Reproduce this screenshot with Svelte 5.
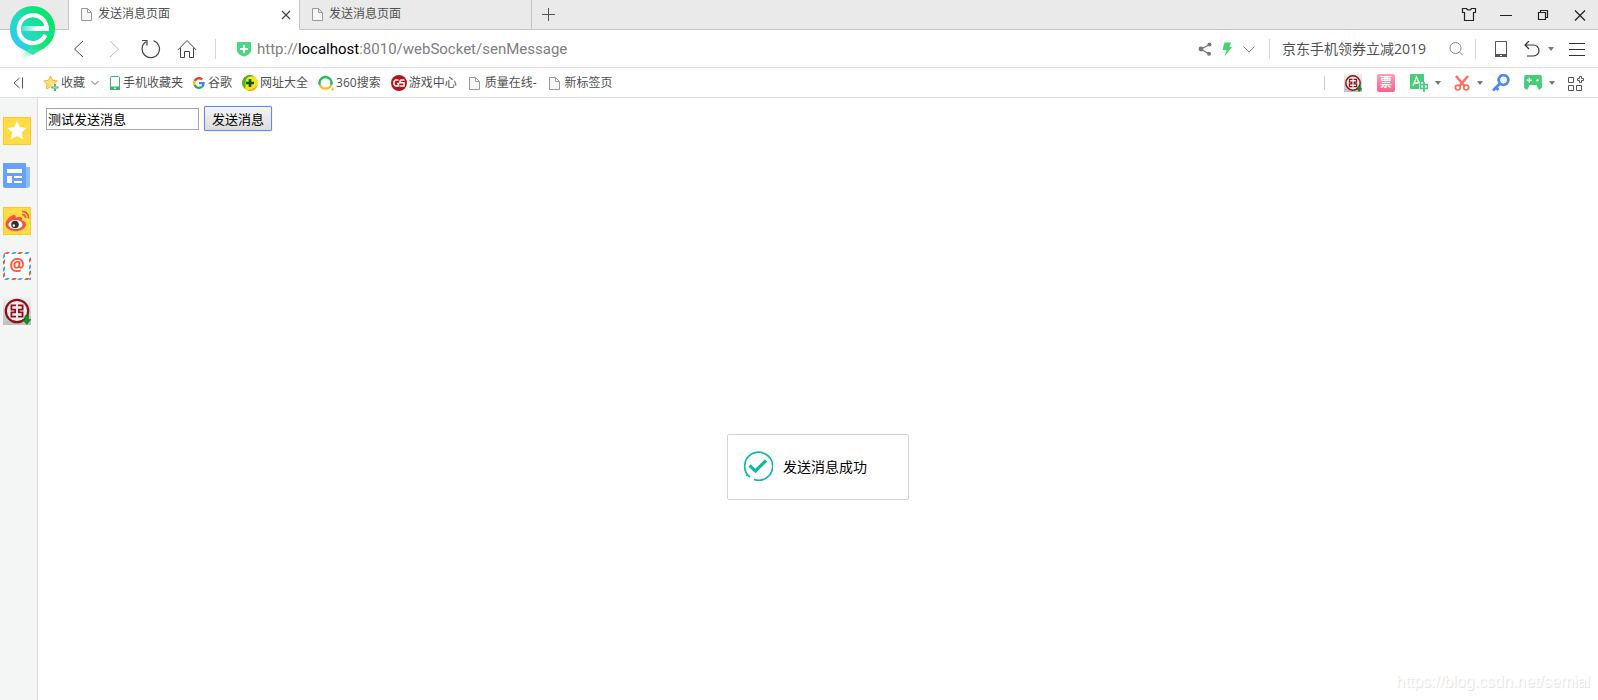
<script>
  let message = $state('测试发送消息');
</script>

{#snippet page()}
  <svg class="i16" viewBox="0 0 16 16"><path d="M2.500 2.500h6l4 4v8h-10zM8.500 2.500v4h4" fill="#f7f7f7" stroke="#999" /></svg>
{/snippet}

{#snippet caret()}
  <svg class="caret" viewBox="0 0 6 4"><path d="M0 0h6L3 4z" fill="#777" /></svg>
{/snippet}

{#snippet bank(size)}
  <svg class={size} viewBox="0 0 30 30">
    <defs>
      <linearGradient id="bank-{size}" x1="0" y1="0" x2="0" y2="1"><stop offset="0" stop-color="#f1f1f1" /><stop offset="1" stop-color="#bdbdbd" /></linearGradient>
    </defs>
    <rect width="30" height="30" fill="url(#bank-{size})" />
    <circle cx="15" cy="15" r="12" fill="#ececec" stroke="#8f1018" stroke-width="2.400" />
    <path d="M14 9H9v4.500h4v3H9V21h5M16 9h5v4.500h-4v3h4V21h-5" fill="none" stroke="#8f1018" stroke-width="1.900" />
    <path d="M23.500 20h4v4H30l-4.500 5.500L21 24h2.500z" fill="#11902a" stroke="#0b6b1d" stroke-width=".6" />
  </svg>
{/snippet}

<div class="browser">
  <a class="logo" href="#home" aria-label="主页">
    <svg viewBox="0 0 48 58">
      <defs>
        <linearGradient id="pin" x1="0.200" y1="0.900" x2="0.900" y2="0.300"><stop offset="0" stop-color="#2bccf4" /><stop offset=".5" stop-color="#22dcb4" /><stop offset="1" stop-color="#08e56c" /></linearGradient>
        <linearGradient id="tail" x1="0.800" y1="0" x2="0.200" y2="1"><stop offset="0" stop-color="#06e566" /><stop offset=".5" stop-color="#1fe583" /><stop offset="1" stop-color="#7df5cc" stop-opacity="0" /></linearGradient>
        <linearGradient id="bar" x1="0" y1="0" x2="1" y2="0"><stop offset="0" stop-color="#fff" stop-opacity=".1" /><stop offset=".6" stop-color="#fff" /></linearGradient>
      </defs>
      <path d="M24.500 1A22.500 22.500 0 0 1 47 24c0 8-4 13-9 17L25 50l-9-5C7 41 2 34 2 24A22.500 22.500 0 0 1 24.500 1z" fill="url(#pin)" />
      <path d="M46 30c-2 6-4 9-10 13.500L11 56l2-5 15-14z" fill="url(#tail)" />
      <path d="M37.500 30A14 14 0 1 1 38 19.500q.7 2 .7 4.500" fill="none" stroke="#fff" stroke-width="4.200" />
      <path d="M12 21h28.800v5H12z" fill="url(#bar)" />
    </svg>
  </a>

  <header class="tabs">
    <span class="lead"></span>
    <div class="tab active">
      {@render page()}<span class="name">发送消息页面</span>
      <button aria-label="关闭标签"><svg class="i16" viewBox="0 0 16 16"><path d="M4 5l8 8M12 5l-8 8" stroke="#444" stroke-width="1.200" /></svg></button>
    </div>
    <div class="tab">{@render page()}<span class="name">发送消息页面</span></div>
    <span class="rule"></span>
    <button class="plus" aria-label="新建标签"><svg class="i16" viewBox="0 0 16 16"><path d="M8.500 1v13M2 7.500h13" stroke="#555" /></svg></button>
    <div class="window">
      <button aria-label="皮肤"><svg class="i16" viewBox="0 0 16 16"><path d="M1.500 1.500h4c.5 2 4.500 2 5 0h4v4h-2v8h-9v-8h-2z" fill="none" stroke="#222" stroke-width="1.200" /></svg></button>
      <button aria-label="最小化"><svg class="i16" viewBox="0 0 16 16"><path d="M2 8.500h12" stroke="#222" /></svg></button>
      <button aria-label="还原"><svg class="i16" viewBox="0 0 16 16"><path d="M3.500 5.500h7v7h-7zM5.500 5V3.500h7v7H11" fill="none" stroke="#222" stroke-width="1.200" /></svg></button>
      <button aria-label="关闭"><svg class="i16" viewBox="0 0 16 16"><path d="M3 3.500l10 10M13 3.500l-10 10" stroke="#222" stroke-width="1.200" /></svg></button>
    </div>
  </header>

  <nav class="toolbar">
    <div class="history">
      <button aria-label="后退"><svg class="i20" viewBox="0 0 20 20"><path d="M14 2L5.500 10l8.500 8" fill="none" stroke="#444" /></svg></button>
      <button aria-label="前进"><svg class="i20" viewBox="0 0 20 20"><path d="M5 2l8.500 8L5 18" fill="none" stroke="#bbb" /></svg></button>
      <button aria-label="刷新"><svg class="i20" viewBox="0 0 20 20"><path d="M12.500 1.700a8.700 8.700 0 1 1-7.500 1M1 1.500h5v5" fill="none" stroke="#444" stroke-width="1.200" /></svg></button>
      <button aria-label="主页"><svg class="i20" viewBox="0 0 20 20"><path d="M.8 11L10 1.500 19.200 11M3.500 9v9.500h4v-6h5v6h4V9" fill="none" stroke="#444" /></svg></button>
    </div>
    <span class="bar"></span>
    <svg class="i16 shield" viewBox="0 0 16 16"><path d="M1 1h14v8c0 4-4 5.500-7 6.500C5 14.500 1 13 1 9z" fill="#4bd880" /><path d="M8 4v8M4 8h8" stroke="#fff" stroke-width="2" /></svg>
    <p class="url">http://<b>localhost</b>:8010/webSocket/senMessage</p>
    <div class="tools">
      <button aria-label="分享"><svg class="i16" viewBox="0 0 16 16"><path d="M13 3.500L4 8l8 5" fill="none" stroke="#777" stroke-width="1.300" /><circle cx="12.500" cy="3.500" r="2" fill="#777" /><circle cx="4" cy="8" r="2.400" fill="#777" /><circle cx="12" cy="12.800" r="2" fill="#777" /></svg></button>
      <button aria-label="加速"><svg class="i16" viewBox="0 0 16 16"><path d="M5.500 1.500H12L10.500 6H13L5.500 15.500 7.500 9H3.500z" fill="#45d275" /></svg></button>
      <button aria-label="更多"><svg class="i16" viewBox="0 0 16 16"><path d="M2.500 5.500L8 11l5.500-5.500" fill="none" stroke="#888" /></svg></button>
    </div>
    <span class="bar near"></span>
    <span class="hint">京东手机领券立减2019</span>
    <button class="find" aria-label="搜索"><svg class="i16" viewBox="0 0 16 16"><circle cx="7.500" cy="7" r="5.500" fill="none" stroke="#888" /><path d="M11.500 11l3 3" stroke="#888" /></svg></button>
    <span class="bar"></span>
    <div class="end">
      <button aria-label="手机"><svg class="i16" viewBox="0 0 16 16"><path d="M2.500.500h11v15h-11z" fill="none" stroke="#555" /><path d="M2 13h12v3H2z" fill="#555" /><path d="M7 14.500h2" stroke="#fff" /></svg></button>
      <button class="undo" aria-label="撤销"><svg class="i16" viewBox="0 0 16 16"><path d="M5 0L1 4l4 4M1 4h8.500a5.500 5.500 0 0 1 0 11H3" fill="none" stroke="#333" stroke-width="1.200" /></svg>{@render caret()}</button>
      <button aria-label="菜单"><svg class="i16" viewBox="0 0 16 16"><path d="M0 2.500h16M0 8.500h16M0 14.500h16" stroke="#333" /></svg></button>
    </div>
  </nav>

  <nav class="marks">
    <button class="fold" aria-label="收起"><svg class="i16" viewBox="0 0 16 16"><path d="M9.500 3L4 8l5.500 5M12.500 2.500v11" fill="none" stroke="#555" /></svg></button>
    <button class="mark fav">
      <svg class="i16" viewBox="0 0 16 16"><path d="M7.500 1l2.100 4.300 4.700.7-3.400 3.300.8 4.700-4.200-2.200L3.300 14l.8-4.700L.7 6l4.700-.7z" fill="#ffe07a" stroke="#f0b53a" /><path d="M12 9v7M8.500 12.500h7" stroke="#fff" stroke-width="4" /><path d="M12 9v7M8.500 12.500h7" stroke="#3fb868" stroke-width="2.200" /><path d="M12 10.500v4M10 12.500h4" stroke="#b9ecca" stroke-width=".7" /></svg>收藏
      <svg class="chev" viewBox="0 0 8 6"><path d="M.500 1L4 4.500 7.500 1" fill="none" stroke="#666" /></svg>
    </button>
    <a class="mark" href="#phone"><svg class="phone" viewBox="0 0 12 16"><rect x="1.500" y="1.500" width="9" height="13" rx="1" fill="#fff" stroke="#3bb76c" /><path d="M1 11.500h10V15H1z" fill="#3bb76c" /><path d="M5 13.200h2" stroke="#fff" /></svg>手机收藏夹</a>
    <a class="mark google" href="#google">
      <svg class="i12" viewBox="0 0 48 48"><path fill="#ea4335" d="M24 9.500c3.500 0 6.700 1.200 9.200 3.600l6.900-6.900C35.900 2.400 30.500 0 24 0 14.600 0 6.500 5.400 2.600 13.200l8 6.200C12.400 13.700 17.700 9.500 24 9.500z" /><path fill="#4285f4" d="M47 24.600c0-1.600-.2-3.100-.4-4.600H24v9h12.900c-.6 3-2.200 5.500-4.700 7.200l7.700 6C44.400 38 47 31.800 47 24.600z" /><path fill="#fbbc05" d="M10.500 28.600a14.500 14.500 0 0 1 0-9.200l-8-6.200a24 24 0 0 0 0 21.600z" /><path fill="#34a853" d="M24 48c6.500 0 11.900-2.100 15.900-5.800l-7.700-6c-2.200 1.500-4.900 2.300-8.200 2.300-6.300 0-11.600-4.200-13.500-9.900l-8 6.200C6.500 42.600 14.600 48 24 48z" /></svg>谷歌
    </a>
    <a class="mark" href="#sites"><svg class="i16" viewBox="0 0 16 16"><circle cx="8" cy="8" r="8" fill="#f8e31c" /><path d="M0 8a8 8 0 0 1 12.500-6.600C8 1 5 2 4 5c-1 3 0 6-1 9A8 8 0 0 1 0 8z" fill="#4db52c" /><path d="M5 15.400C10 14.500 13 13 15.800 9.500A8 8 0 0 1 5 15.400z" fill="#f3a51c" /><path d="M8 4v8M4 8h8" stroke="#0a5a16" stroke-width="2.600" /></svg>网址大全</a>
    <a class="mark" href="#search"><svg class="i16" viewBox="0 0 16 16"><path d="M1.800 9.500a6 6 0 0 0 11.400 0" fill="none" stroke="#fbbd22" stroke-width="2.400" /><path d="M1.800 9.800a6 6 0 1 1 11.400 0" fill="none" stroke="#25bb62" stroke-width="2.400" /><circle cx="14.500" cy="14.300" r="1.200" fill="#fbbd22" /></svg>360搜索</a>
    <a class="mark" href="#games"><svg class="i16" viewBox="0 0 16 16"><circle cx="8" cy="8" r="8" fill="#b5121b" /><path d="M7.500 5H4.500L3 6.500v3L4.500 11h3V8.500H6M13.500 5H10L9 6v1.800h4V11H8.800" fill="none" stroke="#fff" stroke-width="1.500" /></svg>游戏中心</a>
    <a class="mark" href="#quality">{@render page()}质量在线-</a>
    <a class="mark" href="#new">{@render page()}新标签页</a>

    <div class="plugins">
      <span class="split"></span>
      <button aria-label="网银">{@render bank('i18')}</button>
      <button class="ticket" aria-label="抢票"><span>票</span></button>
      <button class="drop" aria-label="翻译"><svg class="i18" viewBox="0 0 18 18"><path d="M1 0h12a1 1 0 0 1 1 1v7h-3v2H9v5H1a1 1 0 0 1-1-1V1a1 1 0 0 1 1-1z" fill="#43cf76" /><path d="M3 12L6.500 3 9.500 9.500M4.200 9h4" fill="none" stroke="#fff" stroke-width="1.400" /><path d="M10.500 10.500h7v4h-7zM14 8v10" fill="none" stroke="#43cf76" stroke-width="1.700" /></svg>{@render caret()}</button>
      <button class="drop" aria-label="截图"><svg class="i16" viewBox="0 0 16 16"><path d="M2 1l8.500 10M14 1L5.500 11" stroke="#ff6f61" stroke-width="2.600" /><circle cx="3.800" cy="12.500" r="2.400" fill="none" stroke="#ff6f61" stroke-width="1.800" /><circle cx="12.200" cy="12.500" r="2.400" fill="none" stroke="#ff6f61" stroke-width="1.800" /></svg>{@render caret()}</button>
      <button class="key" aria-label="登录管家"><svg class="i18" viewBox="0 0 18 18"><circle cx="11.500" cy="6" r="4.800" fill="none" stroke="#4a8cf7" stroke-width="2.800" /><path d="M8 9.500l-7 7M3.500 13l3 3" stroke="#4a8cf7" stroke-width="3" /></svg></button>
      <button class="drop" aria-label="游戏"><svg class="i18" viewBox="0 0 18 18"><path d="M2 1h14a1.800 1.800 0 0 1 1.800 1.800L18 13.500l-2 2h-1.500L12.500 11h-7l-2 4.500H2l-2-2L.2 2.800A1.800 1.800 0 0 1 2 1z" fill="#43cf76" /><path d="M5.300 3.700v5M2.800 6.200h5" stroke="#fff" stroke-width="1.400" /><circle cx="13.500" cy="6.200" r="1.200" fill="#fff" /></svg>{@render caret()}</button>
      <button aria-label="扩展"><svg class="i16" viewBox="0 0 16 16"><path d="M.5 2.500h5v5h-5zM.5 10.500h5v5h-5zM8.500 10.500h5v5h-5zM9.500 3.500h2v-2h2v2h2v2h-2v2h-2v-2h-2z" fill="none" stroke="#555" /></svg></button>
    </div>
  </nav>

  <div class="body">
    <aside>
      <button aria-label="收藏夹"><svg class="i28" viewBox="0 0 28 28"><rect x=".5" y=".5" width="27" height="27" fill="#ffdc45" stroke="#fdc726" /><path d="M14 4l2.900 6.200 6.600.8-4.800 4.500 1.300 6.700-6-3.300-6 3.300 1.300-6.700L4.500 11l6.600-.8z" fill="#fff" /></svg></button>
      <button aria-label="新闻"><svg class="i28" viewBox="0 0 28 28"><path d="M20 5h7v18a3 3 0 0 1-3 3h-4z" fill="#8fbcff" /><path d="M0 1h23v25H2a2 2 0 0 1-2-2z" fill="#68a1fa" /><path d="M4 7h15v4H4zM4 14h5v7H4zM11 14h8v2h-8zM11 19h8v2h-8z" fill="#fff" /></svg></button>
      <button aria-label="微博"><svg class="i28" viewBox="0 0 28 28"><rect x=".5" y=".5" width="27" height="27" fill="#ffdc45" stroke="#fdc726" /><path d="M2.500 17c0-4 6-9.500 9-9 1.500.3 1.500 1.500 1.200 2.700 3-1.200 6.300-1.200 6.300.8 0 .7 0 1.200-.3 1.700 2 .6 4.300 1.800 4.300 4 0 4-5.200 7-10.500 7-5.200 0-10-2.700-10-7.200z" fill="#f45340" /><ellipse cx="12.500" cy="17.500" rx="7" ry="4.600" fill="#fff" /><circle cx="12" cy="17.500" r="3.800" fill="#333" /><circle cx="10.800" cy="18.500" r="1.200" fill="#fff" /><path d="M19 4.500a6 6 0 0 1 6.500 7M19 7.500a3.200 3.200 0 0 1 3.500 3.500" fill="none" stroke="#f45340" stroke-width="1.600" /></svg></button>
      <button class="mail" aria-label="邮箱">
        <svg class="i28" viewBox="0 0 28 28">
          <rect width="28" height="28" fill="#fff" />
          <path d="M3 0h4L5 2H1zM16 0h4l-2 2h-4zM28 5v4l-2 2V7zM28 18v4l-2 2v-4zM8 28h4l2-2h-4zM21 28h4l2-2h-4zM0 9v4l2-2V7zM0 22v4l2-2v-4z" fill="#f15a42" />
          <path d="M10 0h4l-2 2H8zM23 0h4l-2 2h-4zM28 12v4l-2 2v-4zM28 25v3h-2v-1zM1 28h4l2-2H3zM14 28h4l2-2h-4zM0 3v4l2-2V1zM0 16v4l2-2v-4z" fill="#4aa8f0" />
        </svg>
        <span>@</span>
      </button>
      <button aria-label="网银助手">{@render bank('i28')}</button>
    </aside>
    <main>
      <form onsubmit={(e) => e.preventDefault()}>
        <input type="text" aria-label="消息" bind:value={message} />
        <button class="send">发送消息</button>
      </form>
      <div class="toast" role="status">
        <svg class="i30" viewBox="0 0 30 30"><path d="M7 26.200a14 14 0 1 1 4 2.200M3.500 24l.8.800" fill="none" stroke="#13b8a0" stroke-width="1.700" /><path d="M6.500 14.500l6 5.500L23 9.500" fill="none" stroke="#13b8a0" stroke-width="3.200" /></svg>
        <span>发送消息成功</span>
      </div>
      <span class="credit">https://blog.csdn.net/semial</span>
    </main>
  </div>
</div>

<style>
  :global(body) { margin: 0; background: #fff; }
  .browser {
    position: relative;
    display: flex;
    flex-direction: column;
    min-height: 100vh;
    font: 12px/16px "Open Sans", "Noto Sans CJK SC", sans-serif;
    color: #505050;
  }
  svg { display: block; flex: none; }
  button { display: flex; align-items: center; padding: 0; border: 0; background: none; font: inherit; color: inherit; }
  a { color: inherit; text-decoration: none; }
  .i12 { width: 12px; height: 12px; }
  .i16 { width: 16px; height: 16px; }
  .i18 { width: 18px; height: 18px; }
  .i20 { width: 20px; height: 20px; }
  .i28 { width: 28px; height: 28px; }
  .i30 { width: 30px; height: 30px; }
  .caret { width: 6px; height: 4px; }

  .logo { position: absolute; left: 8px; top: 5px; z-index: 1; }
  .logo svg { width: 48px; height: 58px; }

  .tabs { display: flex; height: 30px; background: #eaeaea; box-sizing: border-box; }
  .lead { width: 68px; border-right: 1px solid #c5c5c5; border-bottom: 1px solid #c5c5c5; }
  .tab { box-sizing: border-box; width: 231px; padding: 0 5px 2px 10px; display: flex; align-items: center; gap: 3px; border-bottom: 1px solid #c5c5c5; }
  .tab.active { background: #fff; border-bottom-color: #fff; border-right: 1px solid #c5c5c5; }
  .name { flex: 1; }
  .rule { border-right: 1px solid #c5c5c5; border-bottom: 1px solid #c5c5c5; }
  .plus { padding: 0 8px; border-bottom: 1px solid #c5c5c5; }
  .window { flex: 1; display: flex; justify-content: flex-end; gap: 21px; padding-right: 10px; border-bottom: 1px solid #c5c5c5; }

  .toolbar { display: flex; align-items: center; height: 37px; border-bottom: 1px solid #ddd; padding: 0 13px 0 69px; }
  .history { display: flex; gap: 16px; }
  .bar { width: 1px; height: 20px; background: #d5d5d5; margin: 0 18px; }
  .shield { margin: 0 5px 0 2px; }
  .url { flex: 1; margin: 0; font: 15px/20px Roboto, sans-serif; color: #808080; }
  .url b { font-weight: 400; color: #000; }
  .tools { display: flex; gap: 6px; }
  .bar.near { margin: 0 12px; }
  .hint { font-size: 14px; line-height: 20px; }
  .find { margin-left: 22px; }
  .find + .bar { margin: 0 17px 0 11px; }
  .end { display: flex; gap: 15px; }
  .undo { gap: 8px; }

  .marks { display: flex; align-items: center; gap: 10px; height: 29px; border-bottom: 1px solid #ddd; padding: 0 14px 0 10px; white-space: nowrap; }
  .fold { margin-right: 7px; }
  .mark { display: flex; align-items: center; gap: 2px; }
  .google { gap: 3px; }
  .chev { width: 8px; height: 6px; margin-left: 4px; }
  .phone { width: 12px; height: 16px; }
  .plugins { flex: 1; display: flex; align-items: center; justify-content: flex-end; gap: 13px; }
  .split { width: 1px; height: 14px; background: #ccc; margin-right: 6px; }
  .ticket { width: 18px; height: 18px; justify-content: center; margin: 0 2px; border-radius: 2px; background: linear-gradient(#ff9fb8, #ff5f8c); color: #fff; font-weight: 700; }
  .drop { gap: 7px; }
  .key { margin: 0 1px 0 -4px; }

  .body { flex: 1; display: flex; }
  aside { display: flex; flex-direction: column; gap: 17px; width: 34px; padding: 19px 0 0 3px; background: #f4f6f6; border-right: 1px solid #ddd; }
  .mail { position: relative; width: 28px; }
  .mail span { position: absolute; inset: 0; text-align: center; font: 700 17px/26px "Open Sans", sans-serif; color: #f15a42; }
  main { flex: 1; position: relative; padding: 8px; }
  form { display: flex; align-items: center; gap: 5px; color: #000; font-size: 13px; }
  input { box-sizing: border-box; width: 153px; height: 22px; padding: 1px; border: 1px solid #a5a5a5; font: inherit; color: #000; }
  .send { box-sizing: border-box; height: 25px; padding: 0 7px; border: 1px solid #5d8fdc; border-radius: 1px; box-shadow: 0 0 1px #5d8fdc; background: linear-gradient(#f4f4f4, #dcdcdc); font-size: 13px; }
  .toast { position: absolute; top: 336px; left: 50%; transform: translateX(-50%); box-sizing: border-box; display: flex; align-items: center; gap: 10px; width: 182px; height: 66px; padding: 0 15px 2px; border: 1px solid #d3d4d3; border-radius: 2px; background: #fff; font-size: 14px; line-height: 20px; color: #000; }
  .toast span { padding-top: 2px; }
  .credit { position: absolute; right: 8px; bottom: 8px; font: 16px/20px "Liberation Sans", Arial, sans-serif; color: #fff; text-shadow: 1px 1px 1px #ddd; }
</style>
